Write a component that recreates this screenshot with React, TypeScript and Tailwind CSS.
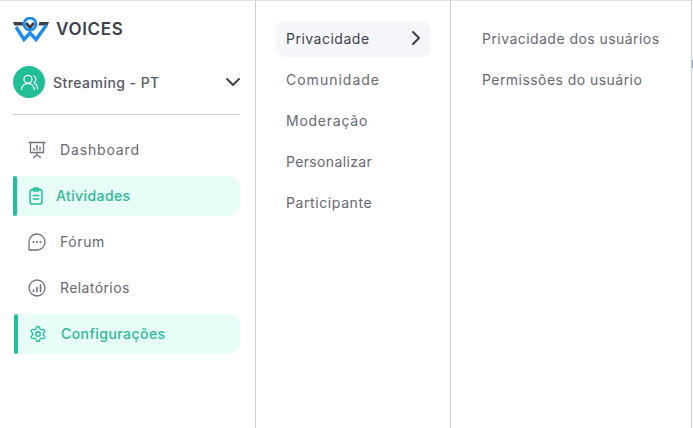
import { ChevronDown, ChevronRight, Settings, UsersRound } from "lucide-react";

const font = "[font-family:Inter,'Liberation_Sans',sans-serif]";

const Logo = () => (
  <svg width="36" height="26" viewBox="0 0 36 26" fill="none">
    <path d="M0 5H9.5L10.5 8.5H1.5ZM36 5H26.5L25.5 8.5H34.5Z" fill="#3b3f4f" />
    <path d="M13 6L17 10.5L21 6" stroke="#3b3f4f" strokeWidth="3" />
    <circle cx="17" cy="7" r="6" stroke="#1d8cf0" strokeWidth="2.8" />
    <path d="M3 10L11 22.5L17 16L23 22.5L33.5 8" stroke="#1d8cf0" strokeWidth="3.4" />
  </svg>
);

const DashboardIcon = () => (
  <svg width="18" height="18" viewBox="0 0 18 18" fill="none" stroke="#6b7280" strokeWidth="1.3" strokeLinecap="round">
    <path d="M1 1.5H17M2.5 1.5V11.5H15.5V1.5M9 11.5V14M5.5 16.5L9 14L12.5 16.5" />
    <path d="M6 9V7.5M9 9V4.5M12 9V6.5" strokeWidth="1.4" />
  </svg>
);

const ActivityIcon = () => (
  <svg width="18" height="18" viewBox="0 0 18 18" fill="none" stroke="#23c09b" strokeWidth="1.5" strokeLinecap="round">
    <rect x="3" y="2.5" width="12" height="14.5" rx="2.6" />
    <rect x="6.2" y="1" width="5.6" height="3" rx="1" />
    <path d="M6.3 8.5H11.7M6.3 12H11.7" />
  </svg>
);

const ForumIcon = () => (
  <svg width="18" height="18" viewBox="0 0 18 18" fill="none" stroke="#6b7280" strokeWidth="1.3" strokeLinecap="round">
    <path d="M9 1C4.6 1 1 4.4 1 8.7V17H9C13.4 17 17 13.4 17 9C17 4.6 13.4 1 9 1Z" strokeLinejoin="round" />
    <path d="M5.5 9H5.6M9 9H9.1M12.5 9H12.6" strokeWidth="1.9" />
  </svg>
);

const ReportIcon = () => (
  <svg width="18" height="18" viewBox="0 0 18 18" fill="none" stroke="#6b7280" strokeWidth="1.3" strokeLinecap="round">
    <circle cx="9" cy="9" r="8" />
    <path d="M5.5 12.5V11M9 12.5V8.5M12.5 12.5V5.8" strokeWidth="1.6" />
  </svg>
);

const NavItem = ({ icon, label, active, gap, track, inset }: { icon: React.ReactNode; label: string; active?: boolean; gap: string; track: string; inset?: string }) => (
  <div className={`flex items-center h-10 rounded-r-xl ${active ? "bg-[#e8fdf8]" : ""} ${inset ?? ""}`}>
    <div className={`w-1 self-stretch rounded-sm ${active ? "bg-[#1fc09a]" : ""}`} />
    <div className={`flex items-center ${gap} ${active ? "font-medium text-[#2dbb96]" : "text-[#666a75]"}`}>
      {icon}
      <span className={`pb-[2px] text-[14px] ${track}`}>{label}</span>
    </div>
  </div>
);

const submenu = [
  { label: "Comunidade", track: "tracking-[1px]" },
  { label: "Moderação", track: "tracking-[0.75px]" },
  { label: "Personalizar", track: "tracking-[0.35px]" },
  { label: "Participante", track: "tracking-[0.6px]" },
];

export default function App() {
  return (
    <div className={`flex h-[428px] w-[693px] overflow-hidden border-t border-[#e2e2e2] bg-white ${font}`}>
      <aside className="w-[256px] shrink-0 border-r border-[#cfcfcf] pl-[13px] pr-[15px]">
        <div className="flex items-center gap-[7px] pt-[16px]">
          <Logo />
          <span className="text-[17px] font-semibold tracking-[0.7px] text-[#3c4050]">VOICES</span>
        </div>
        <div className="mt-[23px] flex items-center border-b border-[#d0d2d6] pb-[16px]">
          <div className="flex h-8 w-8 items-center justify-center rounded-full bg-[#20bf98]">
            <UsersRound size={19} color="#ffffff" strokeWidth={1.6} />
          </div>
          <span className="ml-2 text-[14px] font-medium tracking-[0.45px] text-[#555965]">Streaming - PT</span>
          <ChevronDown size={24} color="#3c4050" strokeWidth={2} className="ml-auto mr-[-5px]" />
        </div>
        <nav className="mt-[15px] flex flex-col gap-[6px]">
          <NavItem gap="ml-[11px] gap-[14px]" track="tracking-[0.85px]" label="Dashboard" icon={<DashboardIcon />} />
          <NavItem active gap="ml-[10px] gap-[11px]" track="tracking-[0.4px]" label="Atividades" icon={<ActivityIcon />} />
          <NavItem gap="ml-[11px] gap-[14px]" track="tracking-[0.6px]" label="Fórum" icon={<ForumIcon />} />
          <NavItem gap="ml-[11px] gap-[14px]" track="tracking-[0.4px]" label="Relatórios" icon={<ReportIcon />} />
          <NavItem active inset="ml-[1px]" gap="ml-[11px] gap-[14px]" track="tracking-[0.45px]" label="Configurações" icon={<Settings size={18} strokeWidth={1.8} color="#23c09b" />} />
        </nav>
      </aside>
      <section className="w-[195px] shrink-0 border-r border-[#cfcfcf] px-5 pt-5 text-[14px] text-[#666a75]">
        <div className="flex h-9 items-center justify-between rounded-lg bg-[#f5f6fa] pl-[10px] pr-[2px] pb-[2px] tracking-[0.5px] text-[#3f4350]">
          Privacidade
          <ChevronRight size={24} color="#3c4050" strokeWidth={2} />
        </div>
        <div className="mt-[2px] flex flex-col">
          {submenu.map((item) => (
            <div key={item.label} className={`flex h-[41px] items-center pl-[10px] ${item.track}`}>{item.label}</div>
          ))}
        </div>
      </section>
      <section className="flex-1 border-r border-[#cfcfcf] pl-[31px] pt-5 text-[14px] text-[#666a75]">
        <div className="flex h-9 items-center pb-[2px] tracking-[0.45px]">Privacidade dos usuários</div>
        <div className="mt-[5px] flex h-9 items-center pb-[2px] tracking-[0.45px]">Permissões do usuário</div>
      </section>
      <div className="relative w-[1px] shrink-0">
        <div className="absolute top-[59px] h-2 w-[1px] bg-[#6fa8dc]" />
      </div>
    </div>
  );
}
